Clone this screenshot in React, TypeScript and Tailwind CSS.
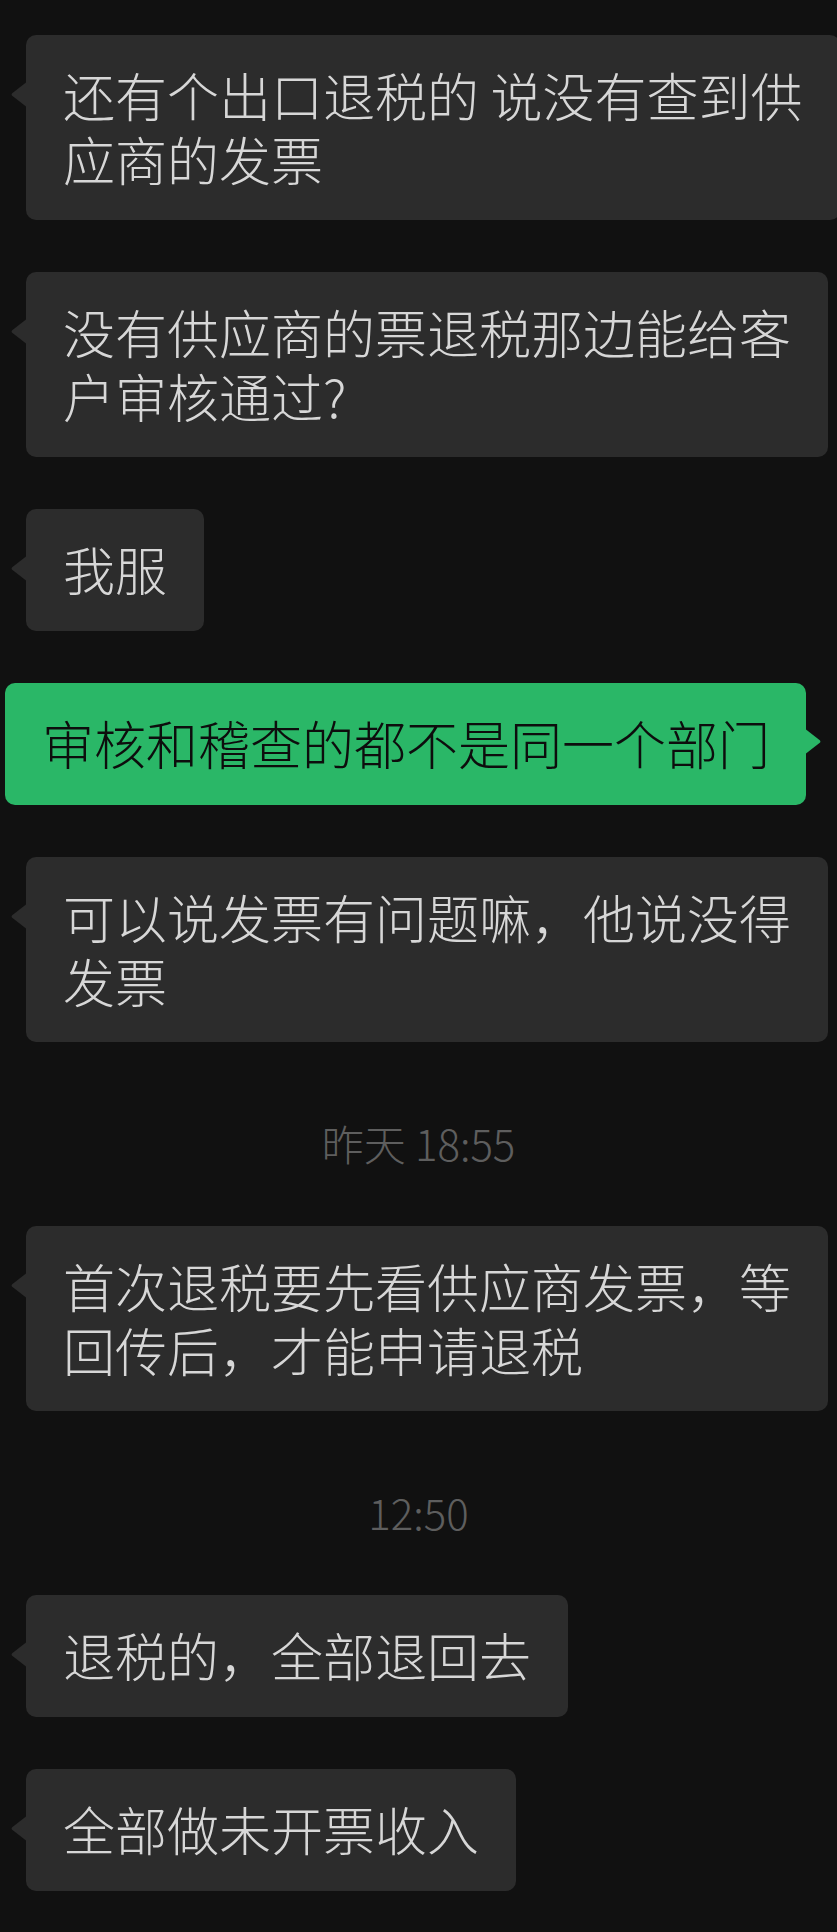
import React from "react";

type Msg =
  | { kind: "in"; lines: string[]; mt: string }
  | { kind: "out"; lines: string[]; mt: string }
  | { kind: "time"; text: string; mt: string };

const messages: Msg[] = [
  { kind: "in", lines: ["还有个出口退税的 说没有查到供", "应商的发票"], mt: "mt-0" },
  { kind: "in", lines: ["没有供应商的票退税那边能给客", "户审核通过?"], mt: "mt-[52px]" },
  { kind: "in", lines: ["我服"], mt: "mt-[52px]" },
  { kind: "out", lines: ["审核和稽查的都不是同一个部门"], mt: "mt-[52px]" },
  { kind: "in", lines: ["可以说发票有问题嘛，他说没得", "发票"], mt: "mt-[52px]" },
  { kind: "time", text: "昨天 18:55", mt: "mt-[80px]" },
  { kind: "in", lines: ["首次退税要先看供应商发票，等", "回传后，才能申请退税"], mt: "mt-[62px]" },
  { kind: "time", text: "12:50", mt: "mt-[80px]" },
  { kind: "in", lines: ["退税的，全部退回去"], mt: "mt-[62px]" },
  { kind: "in", lines: ["全部做未开票收入"], mt: "mt-[52px]" },
];

function TailLeft() {
  return (
    <svg
      className="absolute left-[-15px] top-[47px]"
      width="15"
      height="25"
      viewBox="0 0 15 25"
    >
      <path d="M15.5 0 L1.2 11.2 Q0 12.5 1.2 13.8 L15.5 25 Z" fill="#2c2c2c" />
    </svg>
  );
}

function TailRight() {
  return (
    <svg
      className="absolute right-[-15px] top-[46px]"
      width="15"
      height="25"
      viewBox="0 0 15 25"
    >
      <path d="M-0.5 0 L13.8 11.2 Q15 12.5 13.8 13.8 L-0.5 25 Z" fill="#2ab767" />
    </svg>
  );
}

function Lines({ lines }: { lines: string[] }) {
  return (
    <p className="whitespace-pre">
      {lines.map((l, i) => (
        <React.Fragment key={i}>
          {i > 0 && <br />}
          {l}
        </React.Fragment>
      ))}
    </p>
  );
}

export default function App() {
  return (
    <div className="min-h-[1932px] w-full overflow-hidden bg-[#111111] pt-[35px] font-['Noto_Sans_CJK_SC','Noto_Sans',sans-serif] font-light">
      <div className="flex flex-col">
        {messages.map((m, i) => {
          if (m.kind === "time") {
            return (
              <div
                key={i}
                className={`${m.mt} text-center text-[42px] leading-[42px] text-[#5e5e5e]`}
              >
                {m.text}
              </div>
            );
          }
          const pb = m.lines.length === 1 ? "pb-[30px]" : "pb-[29px]";
          if (m.kind === "out") {
            return (
              <div key={i} className={`${m.mt} flex justify-end pr-[31px]`}>
                <div
                  className={`relative shrink-0 rounded-[10px] bg-[#2ab767] pl-[37px] pr-[36px] pt-[28px] ${pb} text-[52px] leading-[64px] text-[#0d0d0d]`}
                >
                  <Lines lines={m.lines} />
                  <TailRight />
                </div>
              </div>
            );
          }
          return (
            <div key={i} className={`${m.mt} flex pl-[26px]`}>
              <div
                className={`relative shrink-0 rounded-[10px] bg-[#2c2c2c] px-[37px] pt-[28px] ${pb} text-[52px] leading-[64px] text-[#d7d7d7]`}
              >
                <Lines lines={m.lines} />
                <TailLeft />
              </div>
            </div>
          );
        })}
      </div>
    </div>
  );
}
